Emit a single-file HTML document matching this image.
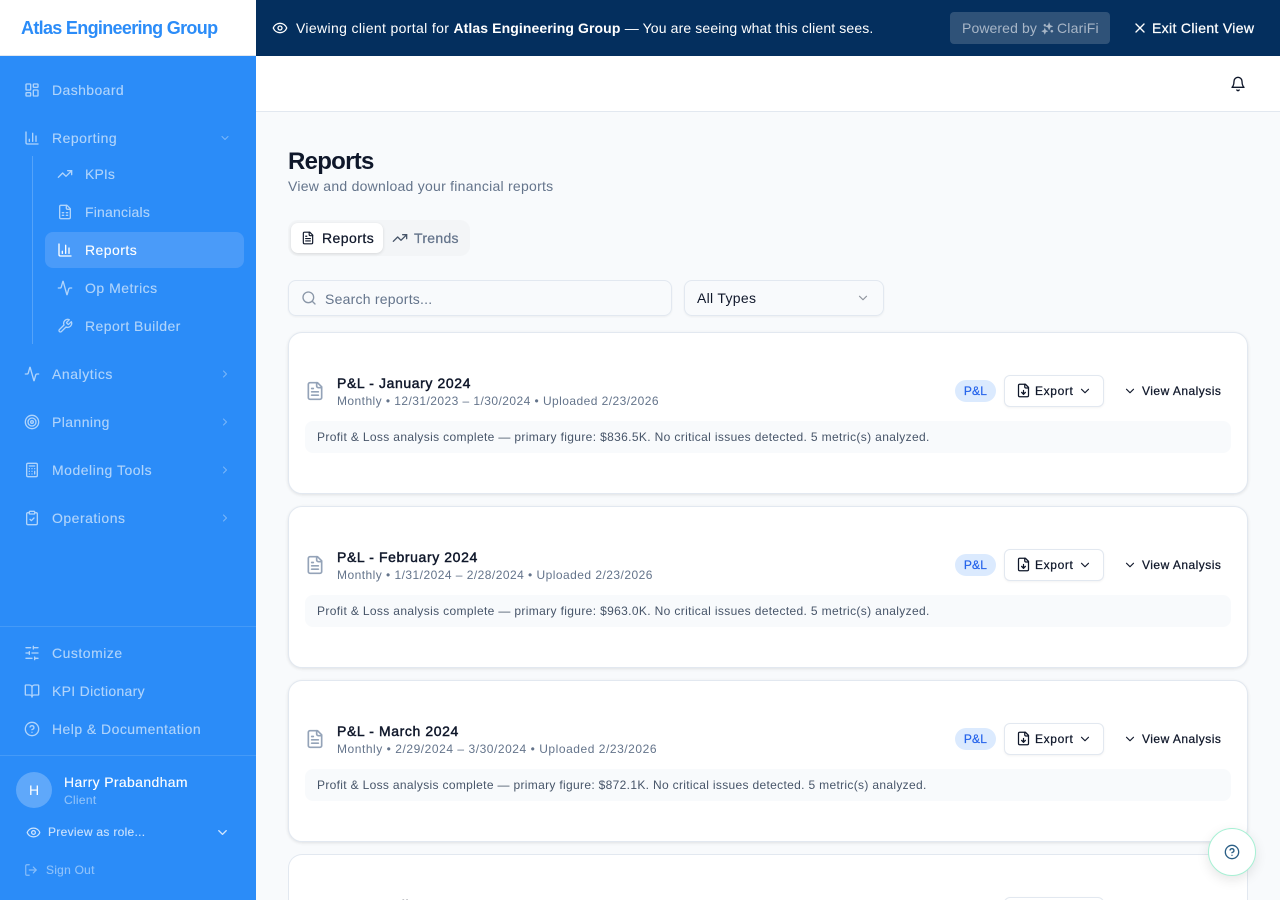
<!DOCTYPE html>
<html lang="en">
<head>
<meta charset="utf-8">
<title>Reports</title>
<style>
*{box-sizing:border-box}
html,body{margin:0;padding:0;width:1280px;height:900px;overflow:hidden;background:#f8fafc;font-family:"Liberation Sans",Arial,sans-serif;color:#0f172a}
.t{position:absolute;white-space:nowrap;line-height:20px;height:20px;font-size:14px;letter-spacing:.3px}
.box{position:absolute}
svg.i{position:absolute;fill:none;stroke:currentColor;stroke-width:2;stroke-linecap:round;stroke-linejoin:round;display:block}
.m{-webkit-text-stroke:.25px currentColor}
#side{position:absolute;left:0;top:0;width:256px;height:900px;background:#2b8cf8;color:#b0d4fb;overflow:hidden}
#side .t{-webkit-text-stroke:.12px currentColor}
#side .w{color:#fff}
#main{position:absolute;left:256px;top:0;width:1024px;height:900px;overflow:hidden}
.card{position:absolute;left:32px;width:960px;height:162px;background:#fff;border:1px solid #e2e8f0;border-radius:14px;box-shadow:0 1px 3px rgba(0,0,0,.1)}
.card .t{color:#0f172a}
.ttl{left:48px;top:40px;font-weight:400;letter-spacing:.6px;-webkit-text-stroke:.45px currentColor}
.meta{left:48px;top:58px;font-size:12px!important;color:#64748b!important;letter-spacing:.44px}
.sum{position:absolute;left:16px;top:88px;width:926px;height:32px;background:#f8fafc;border-radius:8px}
.sumt{left:28px;top:94px;font-size:12px!important;color:#475569!important;letter-spacing:.353px}
.badge{position:absolute;left:666px;top:47px;width:41px;height:22px;border-radius:11px;background:#dbeafe;color:#2563eb;font-size:12px;line-height:22px;text-align:center;letter-spacing:.2px;-webkit-text-stroke:.2px currentColor}
.exp{position:absolute;left:715px;top:42px;width:100px;height:32px;background:#fff;border:1px solid #e2e8f0;border-radius:6px;box-shadow:0 1px 2px rgba(0,0,0,.05)}
.ft{color:#94a3b8}
</style>
</head>
<body>
<svg width="0" height="0" style="position:absolute">
<defs>
<symbol id="dash" viewBox="0 0 24 24"><rect x="3" y="3" width="7" height="9" rx="1"/><rect x="14" y="3" width="7" height="5" rx="1"/><rect x="14" y="12" width="7" height="9" rx="1"/><rect x="3" y="16" width="7" height="5" rx="1"/></symbol>
<symbol id="chart" viewBox="0 0 24 24"><path d="M3 3v16a2 2 0 0 0 2 2h16"/><path d="M18 17V9"/><path d="M13 17V5"/><path d="M8 17v-3"/></symbol>
<symbol id="trend" viewBox="0 0 24 24"><polyline points="22 7 13.5 15.5 8.500 10.5 2 17"/><polyline points="16 7 22 7 22 13"/></symbol>
<symbol id="sheet" viewBox="0 0 24 24"><path d="M15 2H6a2 2 0 0 0-2 2v16a2 2 0 0 0 2 2h12a2 2 0 0 0 2-2V7Z"/><path d="M14 2v4a2 2 0 0 0 2 2h4"/><path d="M8 13h2"/><path d="M14 13h2"/><path d="M8 17h2"/><path d="M14 17h2"/></symbol>
<symbol id="act" viewBox="0 0 24 24"><path d="M22 12h-2.48a2 2 0 0 0-1.93 1.46l-2.35 8.36a.25.25 0 0 1-.48 0L9.24 2.18a.25.25 0 0 0-.48 0l-2.35 8.36A2 2 0 0 1 4.49 12H2"/></symbol>
<symbol id="wrench" viewBox="0 0 24 24"><path d="M14.7 6.3a1 1 0 0 0 0 1.4l1.6 1.6a1 1 0 0 0 1.4 0l3.77-3.77a6 6 0 0 1-7.94 7.94l-6.91 6.91a2.12 2.12 0 0 1-3-3l6.91-6.91a6 6 0 0 1 7.94-7.94l-3.76 3.76z"/></symbol>
<symbol id="target" viewBox="0 0 24 24"><circle cx="12" cy="12" r="10"/><circle cx="12" cy="12" r="6"/><circle cx="12" cy="12" r="2"/></symbol>
<symbol id="calc" viewBox="0 0 24 24"><rect x="4" y="2" width="16" height="20" rx="2"/><line x1="8" y1="6" x2="16" y2="6"/><line x1="16" y1="14" x2="16" y2="18"/><path d="M16 10h.01M12 10h.01M8 10h.01M12 14h.01M8 14h.01M12 18h.01M8 18h.01"/></symbol>
<symbol id="clip" viewBox="0 0 24 24"><rect x="8" y="2" width="8" height="4" rx="1" ry="1"/><path d="M16 4h2a2 2 0 0 1 2 2v14a2 2 0 0 1-2 2H6a2 2 0 0 1-2-2V6a2 2 0 0 1 2-2h2"/><path d="m9 14 2 2 4-4"/></symbol>
<symbol id="slide" viewBox="0 0 24 24"><path d="M21 4h-7M10 4H3M21 12h-9M8 12H3M21 20h-5M12 20H3M14 2v4M8 10v4M16 18v4"/></symbol>
<symbol id="book" viewBox="0 0 24 24"><path d="M12 7v14"/><path d="M3 18a1 1 0 0 1-1-1V4a1 1 0 0 1 1-1h5a4 4 0 0 1 4 4 4 4 0 0 1 4-4h5a1 1 0 0 1 1 1v13a1 1 0 0 1-1 1h-6a3 3 0 0 0-3 3 3 3 0 0 0-3-3z"/></symbol>
<symbol id="help" viewBox="0 0 24 24"><circle cx="12" cy="12" r="10"/><path d="M9.09 9a3 3 0 0 1 5.83 1c0 2-3 3-3 3"/><path d="M12 17h.01"/></symbol>
<symbol id="eye" viewBox="0 0 24 24"><path d="M2.062 12.348a1 1 0 0 1 0-.696 10.75 10.75 0 0 1 19.876 0 1 1 0 0 1 0 .696 10.75 10.75 0 0 1-19.876 0"/><circle cx="12" cy="12" r="3"/></symbol>
<symbol id="out" viewBox="0 0 24 24"><path d="M9 21H5a2 2 0 0 1-2-2V5a2 2 0 0 1 2-2h4"/><polyline points="16 17 21 12 16 7"/><line x1="21" y1="12" x2="9" y2="12"/></symbol>
<symbol id="bell" viewBox="0 0 24 24"><path d="M6 8a6 6 0 0 1 12 0c0 7 3 9 3 9H3s3-2 3-9"/><path d="M10.3 21a1.94 1.94 0 0 0 3.4 0"/></symbol>
<symbol id="x" viewBox="0 0 24 24"><path d="M18 6 6 18"/><path d="m6 6 12 12"/></symbol>
<symbol id="file" viewBox="0 0 24 24"><path d="M15 2H6a2 2 0 0 0-2 2v16a2 2 0 0 0 2 2h12a2 2 0 0 0 2-2V7Z"/><path d="M14 2v4a2 2 0 0 0 2 2h4"/><path d="M10 9H8"/><path d="M16 13H8"/><path d="M16 17H8"/></symbol>
<symbol id="fdown" viewBox="0 0 24 24"><path d="M15 2H6a2 2 0 0 0-2 2v16a2 2 0 0 0 2 2h12a2 2 0 0 0 2-2V7Z"/><path d="M14 2v4a2 2 0 0 0 2 2h4"/><path d="M12 18v-6"/><path d="m9 15 3 3 3-3"/></symbol>
<symbol id="search" viewBox="0 0 24 24"><circle cx="11" cy="11" r="8"/><path d="m21 21-4.3-4.3"/></symbol>
<symbol id="cd" viewBox="0 0 24 24"><path d="m6 9 6 6 6-6"/></symbol>
<symbol id="cr" viewBox="0 0 24 24"><path d="m9 18 6-6-6-6"/></symbol>
<symbol id="spark" viewBox="0 0 24 24"><path d="M15 1l2 5 5 2-5 2-2 5-2-5-5-2 5-2zM7 11l1.800 4.200L13 17l-4.200 1.800L7 23l-1.800-4.200L1 17l4.200-1.800z"/><circle cx="20" cy="17" r="2.200"/><circle cx="7" cy="6" r="2"/></symbol>
</defs>
</svg>

<div id="side">
  <div class="box" style="left:0;top:0;width:256px;height:56px;background:#fff;border-bottom:1px solid #e2e8f0"></div>
  <div class="t" style="left:21px;top:18px;font-size:18px;font-weight:700;color:#2b8cf8;letter-spacing:-.68px;-webkit-text-stroke:0">Atlas Engineering Group</div>

  <svg class="i" style="left:24px;top:82px" width="16" height="16"><use href="#dash"/></svg>
  <div class="t" style="left:52px;top:80px;letter-spacing:.4px">Dashboard</div>

  <svg class="i" style="left:24px;top:130px" width="16" height="16"><use href="#chart"/></svg>
  <div class="t" style="left:52px;top:128px;letter-spacing:.5px">Reporting</div>
  <svg class="i" style="left:219px;top:132px;opacity:.6" width="12" height="12"><use href="#cd"/></svg>

  <div class="box" style="left:32px;top:156px;width:1px;height:188px;background:rgba(255,255,255,.2)"></div>

  <svg class="i" style="left:57px;top:166px" width="16" height="16"><use href="#trend"/></svg>
  <div class="t" style="left:85px;top:164px;letter-spacing:.1px">KPIs</div>
  <svg class="i" style="left:57px;top:204px" width="16" height="16"><use href="#sheet"/></svg>
  <div class="t" style="left:85px;top:202px;letter-spacing:.2px">Financials</div>
  <div class="box" style="left:45px;top:232px;width:199px;height:36px;border-radius:8px;background:#4a9bf9"></div>
  <svg class="i w" style="left:57px;top:242px" width="16" height="16"><use href="#chart"/></svg>
  <div class="t w" style="left:85px;top:240px;letter-spacing:.45px">Reports</div>
  <svg class="i" style="left:57px;top:280px" width="16" height="16"><use href="#act"/></svg>
  <div class="t" style="left:85px;top:278px;letter-spacing:.5px">Op Metrics</div>
  <svg class="i" style="left:57px;top:318px" width="16" height="16"><use href="#wrench"/></svg>
  <div class="t" style="left:85px;top:316px;letter-spacing:.45px">Report Builder</div>

  <svg class="i" style="left:24px;top:366px" width="16" height="16"><use href="#act"/></svg>
  <div class="t" style="left:52px;top:364px;letter-spacing:.55px">Analytics</div>
  <svg class="i" style="left:219px;top:368px;opacity:.6" width="12" height="12"><use href="#cr"/></svg>

  <svg class="i" style="left:24px;top:414px" width="16" height="16"><use href="#target"/></svg>
  <div class="t" style="left:52px;top:412px;letter-spacing:.42px">Planning</div>
  <svg class="i" style="left:219px;top:416px;opacity:.6" width="12" height="12"><use href="#cr"/></svg>

  <svg class="i" style="left:24px;top:462px" width="16" height="16"><use href="#calc"/></svg>
  <div class="t" style="left:52px;top:460px;letter-spacing:.5px">Modeling Tools</div>
  <svg class="i" style="left:219px;top:464px;opacity:.6" width="12" height="12"><use href="#cr"/></svg>

  <svg class="i" style="left:24px;top:510px" width="16" height="16"><use href="#clip"/></svg>
  <div class="t" style="left:52px;top:508px;letter-spacing:.5px">Operations</div>
  <svg class="i" style="left:219px;top:512px;opacity:.6" width="12" height="12"><use href="#cr"/></svg>

  <div class="box" style="left:0;top:626px;width:256px;height:1px;background:rgba(255,255,255,.12)"></div>
  <svg class="i" style="left:24px;top:645px" width="16" height="16"><use href="#slide"/></svg>
  <div class="t" style="left:52px;top:643px;letter-spacing:.5px">Customize</div>
  <svg class="i" style="left:24px;top:683px" width="16" height="16"><use href="#book"/></svg>
  <div class="t" style="left:52px;top:681px">KPI Dictionary</div>
  <svg class="i" style="left:24px;top:721px" width="16" height="16"><use href="#help"/></svg>
  <div class="t" style="left:52px;top:719px;letter-spacing:.45px">Help &amp; Documentation</div>
  <div class="box" style="left:0;top:755px;width:256px;height:1px;background:rgba(255,255,255,.12)"></div>

  <div class="box" style="left:16px;top:772px;width:36px;height:36px;border-radius:50%;background:#5fa8fa;color:#fff;font-size:14px;line-height:36px;text-align:center">H</div>
  <div class="t w" style="left:64px;top:772px;letter-spacing:.35px">Harry Prabandham</div>
  <div class="t" style="left:64px;top:790px;font-size:12px;color:#8fc2fa">Client</div>

  <svg class="i" style="left:26px;top:825px;color:#d0e5fd" width="15" height="15"><use href="#eye"/></svg>
  <div class="t" style="left:48px;top:822px;font-size:12px;letter-spacing:.3px;color:#cae2fd">Preview as role...</div>
  <svg class="i" style="left:215px;top:825px;color:#d0e5fd" width="15" height="15"><use href="#cd"/></svg>

  <svg class="i" style="left:24px;top:863px;opacity:.7" width="14" height="14"><use href="#out"/></svg>
  <div class="t" style="left:46px;top:860px;font-size:12px;color:#8fc2fa;letter-spacing:.25px">Sign Out</div>
</div>

<div id="main">
  <div class="box" style="left:0;top:0;width:1024px;height:56px;background:#042f5e"></div>
  <svg class="i" style="left:16px;top:20px;color:#fff" width="16" height="16"><use href="#eye"/></svg>
  <div class="t" style="left:40px;top:18px;color:#fff;letter-spacing:.35px">Viewing client portal for <b style="letter-spacing:.09px">Atlas Engineering Group</b> <span style="letter-spacing:.13px">— You are seeing what this client sees.</span></div>
  <div class="box" style="left:694px;top:12px;width:160px;height:32px;border-radius:4px;background:#2f5278"></div>
  <div class="t" style="left:706px;top:18px;color:#a8b6c7;letter-spacing:.1px">Powered by</div>
  <svg class="i" style="left:785px;top:22px;color:#a8b6c7;fill:#a8b6c7;stroke-width:.5" width="13" height="13"><use href="#spark"/></svg>
  <div class="t" style="left:801px;top:18px;color:#a8b6c7;letter-spacing:.2px">ClariFi</div>
  <svg class="i" style="left:876px;top:20px;color:#fff" width="16" height="16"><use href="#x"/></svg>
  <div class="t m" style="left:896px;top:18px;color:#fff;letter-spacing:.33px">Exit Client View</div>

  <div class="box" style="left:0;top:56px;width:1024px;height:56px;background:#fff;border-bottom:1px solid #e2e8f0"></div>
  <svg class="i" style="left:974px;top:76px;color:#0f172a" width="16" height="16"><use href="#bell"/></svg>

  <div class="t" style="left:32px;top:151px;font-size:24px;font-weight:700;color:#0f172a;letter-spacing:-.73px;line-height:21px">Reports</div>
  <div class="t" style="left:32px;top:176px;color:#64748b;letter-spacing:.26px">View and download your financial reports</div>

  <div class="box" style="left:32px;top:220px;width:182px;height:36px;border-radius:10px;background:#f3f5f7"></div>
  <div class="box" style="left:35px;top:223px;width:92px;height:30px;border-radius:7px;background:#fff;box-shadow:0 1px 3px rgba(0,0,0,.12)"></div>
  <svg class="i" style="left:45px;top:231px;color:#0f172a" width="14" height="14"><use href="#file"/></svg>
  <div class="t m" style="left:66px;top:228px;color:#0f172a;letter-spacing:.45px">Reports</div>
  <svg class="i" style="left:136px;top:230px;color:#475569" width="16" height="16"><use href="#trend"/></svg>
  <div class="t m" style="left:158px;top:228px;color:#64748b;letter-spacing:.3px">Trends</div>

  <div class="box" style="left:32px;top:280px;width:384px;height:36px;border-radius:8px;border:1px solid #e2e8f0;box-shadow:0 1px 2px rgba(0,0,0,.05)"></div>
  <svg class="i" style="left:45px;top:290px;color:#8a97a8" width="16" height="16"><use href="#search"/></svg>
  <div class="t" style="left:69px;top:289px;color:#64748b;letter-spacing:.23px">Search reports...</div>
  <div class="box" style="left:428px;top:280px;width:200px;height:36px;border-radius:8px;border:1px solid #e2e8f0;box-shadow:0 1px 2px rgba(0,0,0,.05)"></div>
  <div class="t" style="left:441px;top:288px;color:#0f172a;letter-spacing:.3px">All Types</div>
  <svg class="i" style="left:600px;top:291px;color:#0f172a;opacity:.45" width="14" height="14"><use href="#cd"/></svg>

  <div class="card" style="top:332px">
    <svg class="i ft" style="left:16px;top:48px" width="20" height="20"><use href="#file"/></svg>
    <div class="t ttl">P&amp;L - January 2024</div>
    <div class="t meta">Monthly • 12/31/2023 – 1/30/2024 • Uploaded 2/23/2026</div>
    <div class="sum"></div>
    <div class="t sumt">Profit &amp; Loss analysis complete — primary figure: $836.5K. No critical issues detected. 5 metric(s) analyzed.</div>
    <div class="badge">P&amp;L</div>
    <div class="exp"></div>
    <svg class="i" style="left:727px;top:50px" width="15" height="15"><use href="#fdown"/></svg>
    <div class="t m" style="left:746px;top:48px;font-size:12px;letter-spacing:.63px">Export</div>
    <svg class="i" style="left:789px;top:51px" width="14" height="14"><use href="#cd"/></svg>
    <svg class="i" style="left:834px;top:51px" width="14" height="14"><use href="#cd"/></svg>
    <div class="t m" style="left:853px;top:48px;font-size:12px;letter-spacing:.48px">View Analysis</div>
  </div>

  <div class="card" style="top:506px">
    <svg class="i ft" style="left:16px;top:48px" width="20" height="20"><use href="#file"/></svg>
    <div class="t ttl">P&amp;L - February 2024</div>
    <div class="t meta" style="letter-spacing:.46px">Monthly • 1/31/2024 – 2/28/2024 • Uploaded 2/23/2026</div>
    <div class="sum"></div>
    <div class="t sumt">Profit &amp; Loss analysis complete — primary figure: $963.0K. No critical issues detected. 5 metric(s) analyzed.</div>
    <div class="badge">P&amp;L</div>
    <div class="exp"></div>
    <svg class="i" style="left:727px;top:50px" width="15" height="15"><use href="#fdown"/></svg>
    <div class="t m" style="left:746px;top:48px;font-size:12px;letter-spacing:.63px">Export</div>
    <svg class="i" style="left:789px;top:51px" width="14" height="14"><use href="#cd"/></svg>
    <svg class="i" style="left:834px;top:51px" width="14" height="14"><use href="#cd"/></svg>
    <div class="t m" style="left:853px;top:48px;font-size:12px;letter-spacing:.48px">View Analysis</div>
  </div>

  <div class="card" style="top:680px">
    <svg class="i ft" style="left:16px;top:48px" width="20" height="20"><use href="#file"/></svg>
    <div class="t ttl">P&amp;L - March 2024</div>
    <div class="t meta" style="letter-spacing:.54px">Monthly • 2/29/2024 – 3/30/2024 • Uploaded 2/23/2026</div>
    <div class="sum"></div>
    <div class="t sumt" style="letter-spacing:.325px">Profit &amp; Loss analysis complete — primary figure: $872.1K. No critical issues detected. 5 metric(s) analyzed.</div>
    <div class="badge">P&amp;L</div>
    <div class="exp"></div>
    <svg class="i" style="left:727px;top:50px" width="15" height="15"><use href="#fdown"/></svg>
    <div class="t m" style="left:746px;top:48px;font-size:12px;letter-spacing:.63px">Export</div>
    <svg class="i" style="left:789px;top:51px" width="14" height="14"><use href="#cd"/></svg>
    <svg class="i" style="left:834px;top:51px" width="14" height="14"><use href="#cd"/></svg>
    <div class="t m" style="left:853px;top:48px;font-size:12px;letter-spacing:.48px">View Analysis</div>
  </div>

  <div class="card" style="top:854px;height:46px;border-bottom:0;border-radius:14px 14px 0 0;box-shadow:none;overflow:hidden">
    <div class="t ttl">P&amp;L - April 2024</div>
    <div class="exp"></div>
  </div>

  <div class="box" style="left:952px;top:828px;width:48px;height:48px;border-radius:50%;background:#fff;border:1px solid #a7f0d4;box-shadow:0 4px 12px rgba(0,0,0,.1)"></div>
  <svg class="i" style="left:968px;top:844px;color:#2b5f86" width="16" height="16"><use href="#help"/></svg>
</div>
</body>
</html>
